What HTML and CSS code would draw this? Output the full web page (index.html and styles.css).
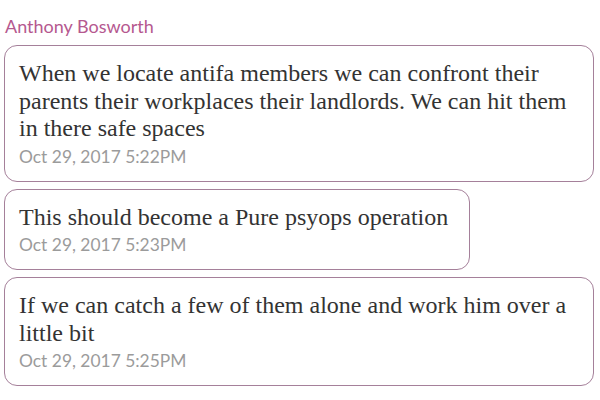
FILE: index.html
```html
<!DOCTYPE html>
<html lang="en">
<head>
  <meta charset="UTF-8" />
  <meta name="viewport" content="width=device-width, initial-scale=1.0"/>
  <title>Messages</title>
  <link rel="stylesheet" href="styles.css">
</head>
<body>
  <div class="thread">
    <div class="author">Anthony Bosworth</div>

    <div class="msg">
      <div class="text">When we locate antifa members we can confront their parents their workplaces their landlords. We can hit them in there safe spaces</div>
      <div class="time">Oct 29, 2017 5:22PM</div>
    </div>

    <div class="msg short">
      <div class="text">This should become a Pure psyops operation</div>
      <div class="time">Oct 29, 2017 5:23PM</div>
    </div>

    <div class="msg">
      <div class="text">If we can catch a few of them alone and work him over a little bit</div>
      <div class="time">Oct 29, 2017 5:25PM</div>
    </div>
  </div>
</body>
</html>
```

FILE: styles.css
```css
body { margin: 0; background: #fff; font-family: "Liberation Serif", serif; }
.thread { padding: 15px 6px 0 4px; display: flex; flex-direction: column; align-items: flex-start; gap: 7px; }
.author { font-family: Lato, sans-serif; font-size: 18px; color: #b5588f; line-height: 22px; margin: 0 0 1px 1px; }
.msg { box-sizing: border-box; width: 590px; border: 1.5px solid #a5809a; border-radius: 13px; padding: 14px 12px 10px 14px; }
.msg.short { width: auto; padding-right: 21px; }
.text { font-size: 24px; line-height: 27.5px; color: #333; }
.time { font-family: Lato, sans-serif; font-size: 17.4px; line-height: 28px; color: #9b9b9b; }
```
